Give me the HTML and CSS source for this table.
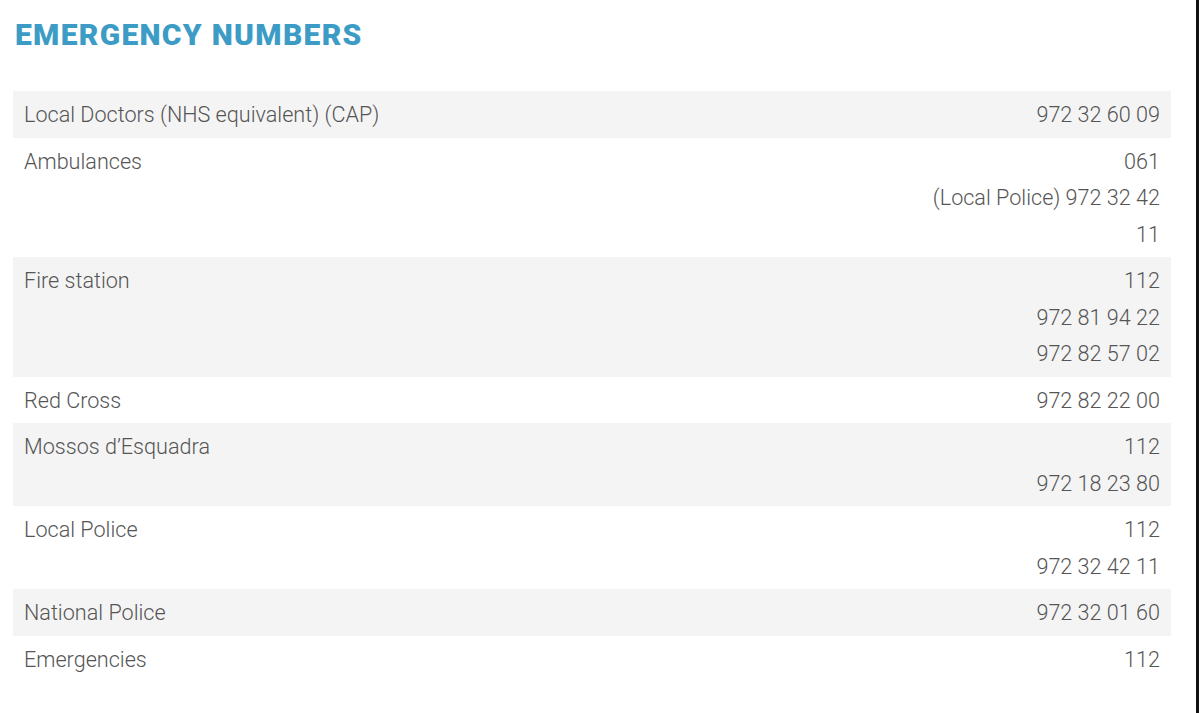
FILE: index.html
```html
<!DOCTYPE html>
<html>
<head>
<meta charset="utf-8">
<link rel="stylesheet" href="styles.css">
</head>
<body>
<div class="page">
  <h2 class="title">EMERGENCY NUMBERS</h2>
  <div class="list">
    <div class="row shade"><div class="name">Local Doctors (NHS equivalent) (CAP)</div><div class="nums">972 32 60 09</div></div>
    <div class="row"><div class="name">Ambulances</div><div class="nums">061<br>(Local Police) 972 32 42 11</div></div>
    <div class="row shade"><div class="name">Fire station</div><div class="nums">112<br>972 81 94 22<br>972 82 57 02</div></div>
    <div class="row"><div class="name">Red Cross</div><div class="nums">972 82 22 00</div></div>
    <div class="row shade"><div class="name">Mossos d’Esquadra</div><div class="nums">112<br>972 18 23 80</div></div>
    <div class="row"><div class="name">Local Police</div><div class="nums">112<br>972 32 42 11</div></div>
    <div class="row shade"><div class="name">National Police</div><div class="nums">972 32 01 60</div></div>
    <div class="row"><div class="name">Emergencies</div><div class="nums">112</div></div>
  </div>
</div>
</body>
</html>
```

FILE: styles.css
```css
html, body {
  margin: 0;
  padding: 0;
  background: #fff;
}
body {
  width: 1200px;
  height: 713px;
  overflow: hidden;
}
.page {
  box-sizing: border-box;
  width: 1199px;
  height: 713px;
  border-right: 3px solid #111;
  padding: 14px 0 0 13px;
  font-family: Roboto, "Liberation Sans", sans-serif;
}
.title {
  margin: 0 0 35px 2px;
  font-family: Roboto, sans-serif;
  font-weight: 900;
  font-size: 30px;
  line-height: 42px;
  color: #3d9cc6;
  letter-spacing: 1.3px;
}
.list {
  width: 1158px;
}
.row {
  display: grid;
  grid-template-columns: 1fr 250px;
  padding: 6px 11px 4px;
  font-size: 21.6px;
  line-height: 36.5px;
  font-weight: 300;
  color: #555;
}
.shade {
  background: #f4f4f4;
}
.nums {
  text-align: right;
}
```
